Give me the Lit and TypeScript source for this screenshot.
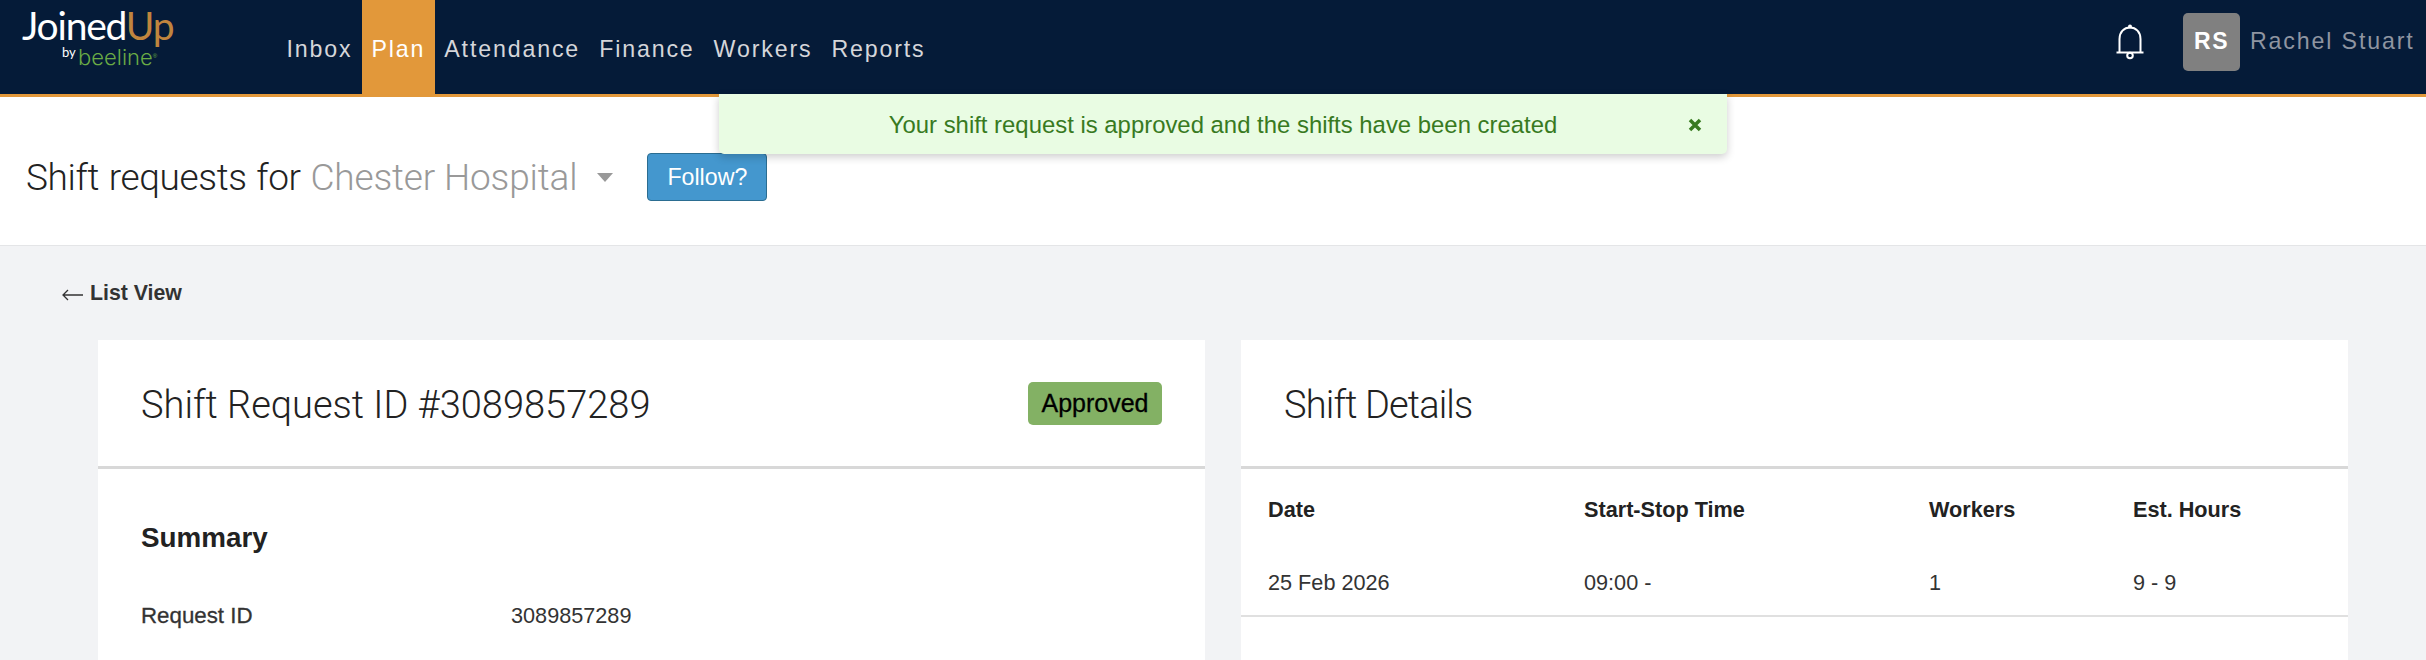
import { LitElement, html, css } from 'lit';
import { customElement } from 'lit/decorators.js';

const NAV_ITEMS = ['Inbox', 'Plan', 'Attendance', 'Finance', 'Workers', 'Reports'];

@customElement('app-root')
export class AppRoot extends LitElement {
  static styles = css`
    :host {
      display: flex;
      flex-direction: column;
      position: relative;
      height: 660px;
      overflow: hidden;
      background: #f2f3f5;
      font-family: 'Liberation Sans', Arial, sans-serif;
      font-size: 21.66px;
      color: #333;
    }

    /* Navbar */
    .navbar {
      display: flex;
      align-items: stretch;
      flex: none;
      height: 94px;
      background: #051b38;
      border-bottom: 3px solid #e2983a;
    }
    .logo {
      display: flex;
      flex-direction: column;
      flex: none;
      width: 277px;
      padding: 7px 0 0 22px;
      box-sizing: border-box;
    }
    .logo-main {
      font-family: Lato, 'Open Sans', sans-serif;
      font-size: 39px;
      line-height: 36px;
      letter-spacing: -1.2px;
      color: #fff;
    }
    .logo-main span {
      color: #c0853e;
    }
    .logo-sub {
      display: flex;
      margin: 2px 0 0 40px;
      height: 24px;
    }
    .logo-by {
      flex: none;
      width: 16px;
      font-family: Lato, sans-serif;
      font-size: 13px;
      line-height: 14px;
      color: #fff;
    }
    .logo-bee {
      font-family: Inter, sans-serif;
      font-size: 22px;
      font-weight: 300;
      line-height: 24px;
      color: #6aab45;
    }
    .logo-reg {
      font-size: 6px;
      line-height: 22px;
      color: #6aab45;
    }
    .nav {
      display: flex;
      align-items: stretch;
      margin-bottom: -3px;
    }
    .nav a {
      display: flex;
      align-items: center;
      padding: 2px 9.500px 0;
      color: #d5d6da;
      letter-spacing: 1.85px;
      font-size: 23.2px;
    }
    .nav a.active {
      background: #e2983a;
      color: #fff;
    }
    .user {
      display: flex;
      align-items: center;
      margin-left: auto;
      padding-bottom: 11px;
      white-space: nowrap;
    }
    .bell {
      display: block;
      width: 30px;
      height: 36px;
      margin-right: 38px;
    }
    .avatar {
      display: flex;
      align-items: center;
      justify-content: center;
      width: 57px;
      height: 58px;
      border-radius: 5px;
      background: #808080;
      color: #fff;
      font-weight: 700;
      font-size: 23px;
      letter-spacing: 1.5px;
      margin-right: 10px;
    }
    .user-name {
      display: flex;
      align-items: center;
      width: 176px;
      color: #8f95a1;
      font-size: 23.2px;
      letter-spacing: 1.85px;
      overflow: hidden;
    }
    .user-caret {
      flex: none;
      margin-left: 11px;
      border-left: 6px solid transparent;
      border-right: 6px solid transparent;
      border-top: 6px solid #8f95a1;
    }

    /* Notification */
    .toast {
      position: absolute;
      left: 719px;
      top: 94px;
      display: flex;
      align-items: center;
      justify-content: center;
      width: 1008px;
      height: 60px;
      padding-top: 2px;
      box-sizing: border-box;
      background: #e9fce3;
      color: #387a1f;
      font-size: 23.9px;
      border-radius: 0 0 5px 5px;
      box-shadow: 0 3px 8px rgba(0, 0, 0, 0.2);
      z-index: 2;
    }
    .toast-close {
      position: absolute;
      right: 25px;
      top: 24px;
      width: 14px;
      height: 14px;
    }

    /* Page header */
    .page-head {
      display: flex;
      align-items: center;
      flex: none;
      height: 149px;
      padding: 12px 0 0 26px;
      box-sizing: border-box;
      background: #fff;
      border-bottom: 1px solid #e4e5e7;
    }
    .page-title {
      margin: 0;
      font-family: Roboto, sans-serif;
      font-weight: 300;
      font-size: 37px;
      letter-spacing: -0.35px;
      word-spacing: 1px;
      color: #222;
      white-space: nowrap;
    }
    .page-title span {
      color: #999;
      letter-spacing: -0.15px;
      word-spacing: 0;
    }
    .caret {
      width: 0;
      height: 0;
      margin: 0 34px 0 20px;
      border-left: 8px solid transparent;
      border-right: 8px solid transparent;
      border-top: 9px solid #999;
    }
    .follow {
      width: 120px;
      height: 48px;
      padding: 0;
      border: 1px solid #2b6d91;
      border-radius: 4px;
      background: #4497ce;
      color: #fff;
      font: inherit;
      font-size: 23.2px;
    }

    /* Content */
    .content {
      display: flex;
      flex-direction: column;
      flex: 1;
      padding: 34px 78px 0 62px;
      min-height: 0;
    }
    .back {
      display: flex;
      align-items: center;
      gap: 7px;
      font-weight: 700;
      font-size: 21.3px;
      line-height: 26px;
      color: #333;
    }
    .back-arrow {
      display: block;
      width: 21px;
      height: 12px;
      margin-top: 4px;
    }
    .cards {
      display: grid;
      grid-template-columns: 1107px 1107px;
      justify-content: space-between;
      flex: 1;
      margin: 34px 0 0 36px;
    }
    .card {
      background: #fff;
    }
    .card-head {
      display: flex;
      align-items: center;
      justify-content: space-between;
      height: 129px;
      padding: 0 43px;
      box-sizing: border-box;
      border-bottom: 3px solid #d8d8d8;
    }
    .card-title {
      margin: 4px 0 0;
      font-family: Roboto, sans-serif;
      font-weight: 300;
      font-size: 38px;
      color: #222;
    }
    .card-title.tight {
      letter-spacing: -0.85px;
    }
    .badge {
      display: flex;
      align-items: center;
      justify-content: center;
      width: 134px;
      height: 43px;
      border-radius: 5px;
      background: #83b164;
      color: #000;
      font-size: 25px;
      -webkit-text-stroke: 0.3px #000;
    }
    .card-body {
      padding: 50px 43px;
    }
    .card-body h3 {
      margin: 0 0 46px;
      font-size: 27.8px;
      line-height: 38px;
      color: #222;
    }
    .field {
      display: grid;
      grid-template-columns: 370px 1fr;
      line-height: 26px;
      color: #333;
    }
    .field b {
      font-weight: 400;
      font-size: 22.3px;
      -webkit-text-stroke: 0.3px #333;
    }
    .shift-table {
      display: grid;
      grid-template-columns: 316px 345px 204px 1fr;
      padding: 0 27px;
      color: #333;
    }
    .shift-table > div {
      display: flex;
      align-items: center;
    }
    .shift-table .th {
      height: 82px;
      font-weight: 700;
      color: #222;
    }
    .shift-table .td {
      height: 64px;
    }
    .row-line {
      height: 2px;
      background: #e0e0e0;
    }
  `;

  render() {
    return html`
      <header class="navbar">
        <div class="logo">
          <div class="logo-main">Joined<span>Up</span></div>
          <div class="logo-sub">
            <span class="logo-by">by</span><span class="logo-bee">beeline</span><span class="logo-reg">®</span>
          </div>
        </div>
        <nav class="nav">
          ${NAV_ITEMS.map(
            (item) => html`<a class=${item === 'Plan' ? 'active' : ''}>${item}</a>`
          )}
        </nav>
        <div class="user">
          <svg class="bell" viewBox="0 0 30 36" fill="none" stroke="#fff" stroke-width="2">
            <path d="M4.500 28V15C4.500 8 9 3.500 15 3.500S25.500 8 25.500 15v13" />
            <path d="M1.500 28.500h27" />
            <circle cx="15" cy="2.500" r="2" fill="#fff" stroke="none" />
            <circle cx="15" cy="31.500" r="2.800" />
          </svg>
          <div class="avatar">RS</div>
          <div class="user-name">Rachel Stuart<span class="user-caret"></span></div>
        </div>
      </header>

      <div class="toast">
        Your shift request is approved and the shifts have been created
        <svg class="toast-close" viewBox="0 0 14 14" stroke="#387a1f" stroke-width="3.500">
          <path d="M2 2l10 10M12 2L2 12" />
        </svg>
      </div>

      <section class="page-head">
        <h1 class="page-title">Shift requests for <span>Chester Hospital</span></h1>
        <div class="caret"></div>
        <button class="follow">Follow?</button>
      </section>

      <main class="content">
        <div class="back">
          <svg class="back-arrow" viewBox="0 0 21 12" fill="none" stroke="#333" stroke-width="1.300">
            <path d="M1 6h20M6 1L1 6l5 5" />
          </svg>
          List View
        </div>
        <div class="cards">
          <section class="card">
            <div class="card-head">
              <h2 class="card-title">Shift Request ID #3089857289</h2>
              <div class="badge">Approved</div>
            </div>
            <div class="card-body">
              <h3>Summary</h3>
              <div class="field"><b>Request ID</b><span>3089857289</span></div>
            </div>
          </section>
          <section class="card">
            <div class="card-head">
              <h2 class="card-title tight">Shift Details</h2>
            </div>
            <div class="shift-table">
              <div class="th">Date</div>
              <div class="th">Start-Stop Time</div>
              <div class="th">Workers</div>
              <div class="th">Est. Hours</div>
              <div class="td">25 Feb 2026</div>
              <div class="td">09:00 -</div>
              <div class="td">1</div>
              <div class="td">9 - 9</div>
            </div>
            <div class="row-line"></div>
          </section>
        </div>
      </main>
    `;
  }
}
